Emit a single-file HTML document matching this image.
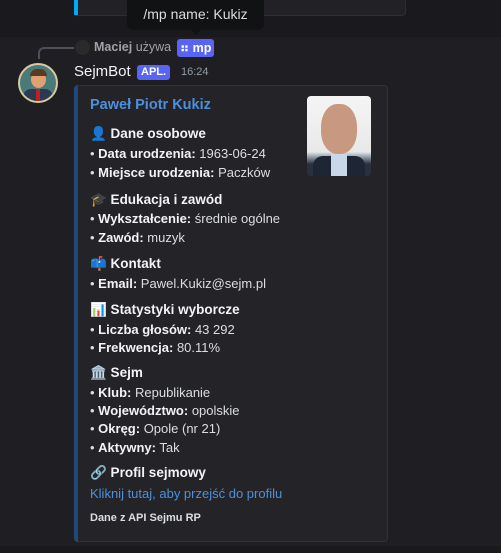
<!DOCTYPE html>
<html><head><meta charset="utf-8"><style>
*{margin:0;padding:0;box-sizing:border-box}
body{width:501px;height:553px;background:#1f1f23;font-family:"Liberation Sans",sans-serif;color:#dbdee1;position:relative;overflow:hidden;font-size:13px}
.a{position:absolute;white-space:nowrap}
b{font-weight:bold;color:#f2f3f5}
.h{font-weight:bold;color:#f2f3f5;font-size:13.5px}
.i{font-size:13px;color:#dbdee1}
</style></head><body>
<div class="a" style="left:0;top:0;width:501px;height:37px;background:#1a1a1e"></div>
<div class="a" style="left:74px;top:0;width:332px;height:16px;background:#222226;border:1px solid #2e2e33;border-top:none;border-radius:0 0 4px 4px"></div>
<div class="a" style="left:74px;top:0;width:4px;height:15px;background:#00a8fc"></div>
<div class="a" style="left:127px;top:0;width:137px;height:30px;background:#111214;border-radius:0 0 6px 6px;color:#dbdee1;font-size:14px;line-height:28px;text-align:center">/mp name: Kukiz</div>
<div class="a" style="left:191px;top:30px;width:0;height:0;border-left:5px solid transparent;border-right:5px solid transparent;border-top:5px solid #111214"></div>
<div class="a" style="left:0;top:546px;width:501px;height:7px;background:#1a1a1e"></div>
<!-- reply line -->
<div class="a" style="left:38px;top:47px;width:36px;height:12px;border-left:2px solid #4e5058;border-top:2px solid #4e5058;border-radius:6px 0 0 0"></div>
<div class="a" style="left:75px;top:40px;width:15px;height:15px;border-radius:50%;background:#2a2a2a"></div>
<div class="a" style="left:94px;top:40px;font-size:12.5px;color:#a0a2a8;font-weight:bold">Maciej <span style="font-weight:normal">używa</span></div>
<div class="a" style="left:177px;top:39px;height:18px;padding:0 3px;background:#5865f2;border-radius:3px;color:#fff;font-weight:bold;font-size:12.5px;line-height:18px">⠶ mp</div>
<!-- avatar -->
<div class="a" style="left:18px;top:63px;width:40px;height:40px;border-radius:50%;background:#4a7a7a;border:2px solid #d9c9a0;overflow:hidden">
<div style="position:absolute;left:11px;top:6px;width:15px;height:17px;border-radius:50%;background:#e0a070"></div>
<div style="position:absolute;left:10px;top:4px;width:17px;height:7px;border-radius:8px 8px 0 0;background:#5a3a20"></div>
<div style="position:absolute;left:3px;top:24px;width:30px;height:16px;background:#2a3a55;border-radius:8px 8px 0 0"></div>
<div style="position:absolute;left:16px;top:24px;width:4px;height:14px;background:#c02020"></div>
</div>
<div class="a" style="left:74px;top:63px;font-size:15px;color:#f2f3f5">SejmBot</div>
<div class="a" style="left:137px;top:65px;height:15px;padding:0 4px;background:#5865f2;border-radius:3px;color:#fff;font-weight:bold;font-size:11px;line-height:15px">APL.</div>
<div class="a" style="left:181px;top:66px;font-size:11px;color:#949ba4">16:24</div>
<!-- embed -->
<div class="a" style="left:74px;top:85px;width:314px;height:457px;background:#242428;border:1px solid #313136;border-radius:4px"></div>
<div class="a" style="left:74px;top:85px;width:4px;height:457px;background:#1e4a7a;border-radius:4px 0 0 4px"></div>
<div class="a" style="left:90px;top:97px;font-size:14.5px;font-weight:bold;color:#4d8fdc">Paweł Piotr Kukiz</div>
<div class="a" style="left:307px;top:96px;width:64px;height:80px;border-radius:4px;background:linear-gradient(#f4f4f4 0,#f0f0f0 30%,#e8e8e8 70%,#c8d0d8 72%,#2a3040 85%)">
<div style="position:absolute;left:14px;top:8px;width:36px;height:50px;border-radius:45%;background:#c89880"></div>
<div style="position:absolute;left:6px;top:60px;width:52px;height:20px;background:#1e2535;border-radius:10px 10px 0 0"></div>
<div style="position:absolute;left:24px;top:58px;width:16px;height:22px;background:#c8d8e8"></div>
</div>
<div class="a h" style="left:90px;top:126px">👤 Dane osobowe</div>
<div class="a i" style="left:90px;top:146px">• <b>Data urodzenia:</b> 1963-06-24</div>
<div class="a i" style="left:90px;top:165px">• <b>Miejsce urodzenia:</b> Paczków</div>
<div class="a h" style="left:90px;top:192px">🎓 Edukacja i zawód</div>
<div class="a i" style="left:90px;top:211px">• <b>Wykształcenie:</b> średnie ogólne</div>
<div class="a i" style="left:90px;top:230px">• <b>Zawód:</b> muzyk</div>
<div class="a h" style="left:90px;top:256px">📫 Kontakt</div>
<div class="a i" style="left:90px;top:276px">• <b>Email:</b> Pawel.Kukiz@sejm.pl</div>
<div class="a h" style="left:90px;top:302px">📊 Statystyki wyborcze</div>
<div class="a i" style="left:90px;top:322px">• <b>Liczba głosów:</b> 43 292</div>
<div class="a i" style="left:90px;top:340px">• <b>Frekwencja:</b> 80.11%</div>
<div class="a h" style="left:90px;top:365px">🏛️ Sejm</div>
<div class="a i" style="left:90px;top:385px">• <b>Klub:</b> Republikanie</div>
<div class="a i" style="left:90px;top:403px">• <b>Województwo:</b> opolskie</div>
<div class="a i" style="left:90px;top:421px">• <b>Okręg:</b> Opole (nr 21)</div>
<div class="a i" style="left:90px;top:440px">• <b>Aktywny:</b> Tak</div>
<div class="a h" style="left:90px;top:465px">🔗 Profil sejmowy</div>
<div class="a" style="left:90px;top:486px;color:#4d8fdc;font-size:13px">Kliknij tutaj, aby przejść do profilu</div>
<div class="a" style="left:90px;top:512px;font-size:11px;font-weight:bold;color:#dbdee1">Dane z API Sejmu RP</div>
</body></html>
